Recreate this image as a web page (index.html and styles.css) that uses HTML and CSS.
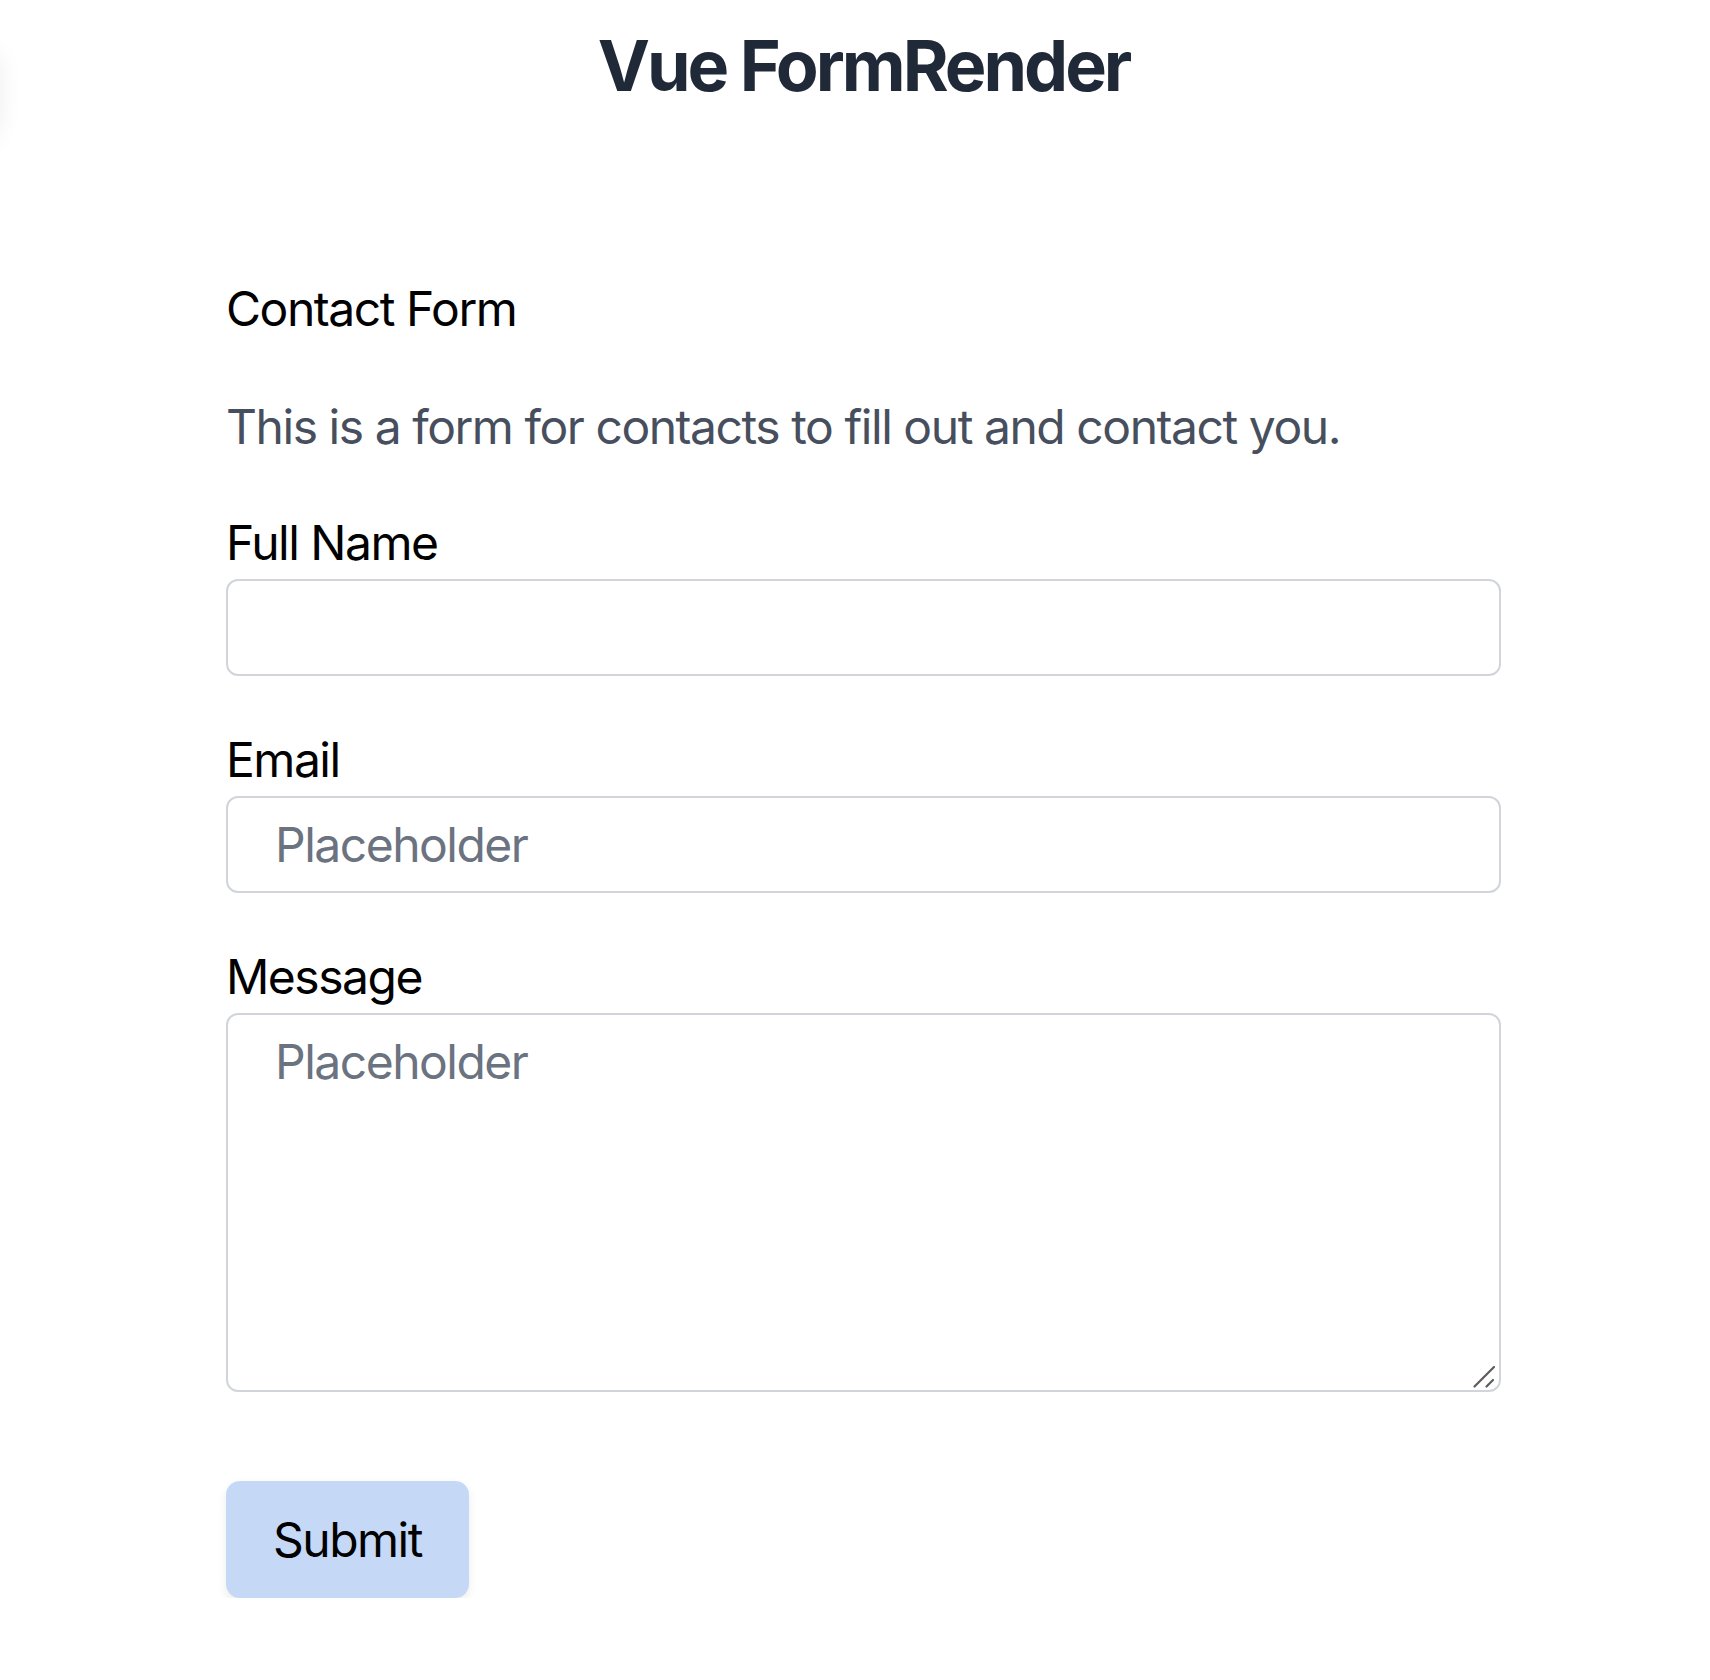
FILE: index.html
```html
<!DOCTYPE html>
<html lang="en">
<head>
<meta charset="utf-8">
<title>Vue FormRender</title>
<link rel="stylesheet" href="styles.css">
</head>
<body>
<div class="edge-blob"></div>
<div class="page">
  <h1 class="title">Vue FormRender</h1>
  <form class="form">
    <h2 class="form-title">Contact Form</h2>
    <p class="form-desc">This is a form for contacts to fill out and contact you.</p>
    <div class="field">
      <label class="label" for="name">Full Name</label>
      <input class="input" id="name" type="text">
    </div>
    <div class="field">
      <label class="label" for="email">Email</label>
      <input class="input" id="email" type="email" placeholder="Placeholder">
    </div>
    <div class="field">
      <label class="label" for="msg">Message</label>
      <div class="textarea-wrap">
        <textarea class="textarea" id="msg" placeholder="Placeholder"></textarea>
        <svg class="resize-grip" width="30" height="30" viewBox="0 0 30 30" aria-hidden="true">
          <path d="M23 5 L3.5 24.5 M22 18 L15.5 24.5" stroke="#5c5c5c" stroke-width="2.2" stroke-linecap="round" fill="none"/>
        </svg>
      </div>
    </div>
    <div class="actions">
      <button class="submit" type="button">Submit</button>
    </div>
  </form>
</div>
</body>
</html>
```
FILE: styles.css
```css
html, body {
  margin: 0;
  padding: 0;
  background: #ffffff;
}
body {
  font-family: Inter, "Noto Sans", "Liberation Sans", sans-serif;
  color: #000;
}
.edge-blob {
  position: fixed;
  left: -70px;
  top: 50px;
  width: 70px;
  height: 90px;
  border-radius: 20px;
  box-shadow: 0 0 24px rgba(0, 0, 0, 0.07);
}
.page {
  width: 1275px;
  margin-left: 226px;
}
.title {
  margin: 26px 0 0;
  font-size: 70px;
  line-height: 80px;
  font-weight: 700;
  color: #1f2937;
  text-align: center;
  letter-spacing: -3px;
}
.form {
  display: flex;
  flex-direction: column;
  margin-top: 171px;
}
.form-title {
  margin: 0;
  font-size: 48px;
  line-height: 64px;
  font-weight: 400;
  color: #000;
  letter-spacing: -1.45px;
}
.form-desc {
  margin: 54px 0 0;
  font-size: 48px;
  line-height: 64px;
  color: #474f5e;
  letter-spacing: -1.45px;
}
.field {
  display: flex;
  flex-direction: column;
  gap: 4px;
  margin-top: 52px;
}
.label {
  font-size: 48px;
  line-height: 64px;
  color: #000;
  letter-spacing: -1.5px;
}
.input,
.textarea {
  box-sizing: border-box;
  width: 100%;
  border: 2px solid #d1d5db;
  border-radius: 12px;
  font-family: inherit;
  font-size: 48px;
  letter-spacing: -1.5px;
  color: #111827;
  background: #fff;
  outline: none;
}
.input {
  height: 97px;
  padding: 0 47px;
}
.textarea-wrap {
  position: relative;
}
.textarea {
  display: block;
  height: 379px;
  padding: 15px 47px;
  line-height: 64px;
  resize: none;
}
.resize-grip {
  position: absolute;
  right: 0;
  bottom: 0;
  pointer-events: none;
}
.input::placeholder,
.textarea::placeholder {
  color: #6b7280;
  opacity: 1;
}
.actions {
  margin-top: 89px;
}
.submit {
  height: 117px;
  padding: 0 47px;
  border: none;
  border-radius: 14px;
  background: #c5d9f7;
  color: #000;
  font-family: inherit;
  font-size: 48px;
  letter-spacing: -1.5px;
  box-shadow: 0 4px 10px rgba(0, 0, 0, 0.08);
}
```
